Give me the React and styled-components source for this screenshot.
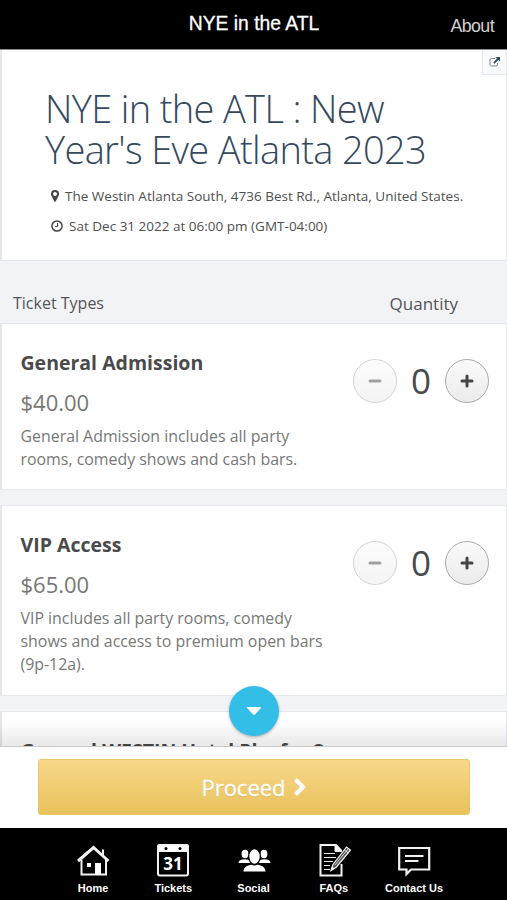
import styled, { createGlobalStyle } from "styled-components";

const GlobalStyle = createGlobalStyle`
  * {
    box-sizing: border-box;
    margin: 0;
    padding: 0;
  }

  body {
    width: 507px;
    height: 900px;
    overflow: hidden;
    font-family: "Open Sans", sans-serif;
  }
`

const Page = styled.div`
  width: 507px;
  height: 900px;
  display: flex;
  flex-direction: column;
  overflow: hidden;
  background-color: #f1f3f6;
`

const Header = styled.header`
  height: 50px;
  flex: none;
  display: grid;
  grid-template-columns: 90px 1fr 90px;
  background-color: #000000;
  border-bottom: 1px solid #8c8c8c;
  font-family: "Liberation Sans", sans-serif;
  color: #ffffff;
  white-space: nowrap;
`

const HeaderTitle = styled.h1`
  grid-column: 2;
  padding: 12px 0 0 1px;
  text-align: center;
  font-size: 19.3px;
  font-weight: 400;
  line-height: 24px;
  -webkit-text-stroke: 0.3px #ffffff;
`

const AboutLink = styled.a`
  padding: 14px 13px 0 0;
  text-align: right;
  font-size: 17.8px;
  line-height: 24px;
  letter-spacing: -0.6px;
  color: #d2d2d2;
`

const Content = styled.main`
  position: relative;
  flex: 1;
  min-height: 0;
  overflow: hidden;
`

const Card = styled.section`
  background-color: #ffffff;
  border: solid #e5e7ea;
  border-width: 1px 1px 1px 2px;
`

const EventCard = styled(Card)`
  position: relative;
  height: 211px;
  padding: 38px 20px 0 43px;
  border-top: none;
`

const ShareButton = styled.button`
  position: absolute;
  top: 0;
  right: 0;
  width: 24px;
  height: 25px;
  display: flex;
  align-items: center;
  justify-content: center;
  background-color: #f8fafc;
  border: solid #e3e7ec;
  border-width: 0 0 1px 1px;
`

const EventTitle = styled.h2`
  font-size: 38px;
  font-weight: 300;
  line-height: 41px;
  letter-spacing: -0.65px;
  color: #34495e;
  white-space: nowrap;
`

const EventInfo = styled.div`
  height: 30px;
  display: flex;
  align-items: center;
  gap: 6px;
  padding-left: 6px;
  font-size: 13.53px;
  color: #4f4f4f;
  white-space: nowrap;
`

const InfoList = styled.div`
  padding-top: 11px;
`

const ListHeading = styled.div`
  height: 62px;
  display: flex;
  justify-content: space-between;
  padding: 30px 49px 0 13px;
  font-size: 16px;
  line-height: 24px;
  color: #555555;
`

const QuantityLabel = styled.span`
  font-size: 17px;
  line-height: 26px;
`

const TicketCard = styled(Card)`
  height: ${({ $height }) => $height}px;
  margin-bottom: 15px;
  padding: 26px 17px 0 18.5px;
  display: flex;
  justify-content: space-between;
`

const TicketInfo = styled.div`
  white-space: nowrap;
`

const TicketName = styled.h3`
  font-size: 19.5px;
  font-weight: 700;
  line-height: 26px;
  color: #4a4a4a;
`

const Price = styled.p`
  margin-top: 11px;
  font-size: 22px;
  line-height: 30px;
  color: #777777;
`

const Description = styled.p`
  margin-top: 8px;
  font-size: 15.9px;
  line-height: 23px;
  color: #777777;
`

const Stepper = styled.div`
  height: 44px;
  margin-top: 9px;
  display: grid;
  grid-template-columns: 44px 48px 44px;
  align-items: center;
`

const StepButton = styled.button`
  width: 44px;
  height: 44px;
  display: flex;
  align-items: center;
  justify-content: center;
  border: 1px solid #aaaaaa;
  border-radius: 50%;
  background: linear-gradient(#fafafa, #ebebeb);
  color: #444444;
  opacity: ${({ disabled }) => (disabled ? 0.5 : 1)};
`

const Count = styled.span`
  text-align: center;
  font-size: 35px;
  line-height: 44px;
  color: #4a4a4a;
`

const ScrollFade = styled.div`
  position: absolute;
  left: 0;
  right: 0;
  bottom: 0;
  height: 26px;
  background: linear-gradient(rgba(0, 0, 0, 0), rgba(0, 0, 0, 0.09));
  border-bottom: 1px solid #cccccc;
`

const ScrollButton = styled.button`
  position: absolute;
  left: 229px;
  bottom: 11px;
  width: 50px;
  height: 50px;
  display: flex;
  align-items: center;
  justify-content: center;
  border: none;
  border-radius: 50%;
  background-color: #32bee6;
  box-shadow: 0 1px 3px rgba(0, 0, 0, 0.3);
`

const ActionBar = styled.div`
  height: 81px;
  flex: none;
  padding: 12px 37px 0 38px;
  background-color: #ffffff;
`

const ProceedButton = styled.button`
  width: 100%;
  height: 56px;
  display: flex;
  align-items: center;
  justify-content: center;
  gap: 7px;
  border: 1px solid #e9c46a;
  border-radius: 3px;
  background: linear-gradient(#f8d789, #e9c25b);
  font-family: inherit;
  font-size: 22px;
  color: #ffffff;
  text-shadow: 0 1px 1px rgba(0, 0, 0, 0.12);
  -webkit-text-stroke: 0.3px #ffffff;
`

const TabBar = styled.nav`
  height: 72px;
  flex: none;
  display: grid;
  grid-template-columns: repeat(5, 80.25px);
  justify-content: center;
  padding-top: 15px;
  background-color: #000000;
`

const Tab = styled.a`
  display: flex;
  flex-direction: column;
  align-items: center;
  font-family: "Liberation Sans", sans-serif;
  font-size: 11px;
  font-weight: 700;
  line-height: 14px;
  color: #ffffff;
  white-space: nowrap;
`

const TabIcon = styled.svg`
  width: 36px;
  height: 36px;
  margin-bottom: 2px;
  fill: none;
  stroke: #f2f2f2;
`

const icons = {
  Home: (
    <>
      <path d="M3 18 18.500 4.500l15 13.500" strokeWidth="3" />
      <path d="M6.500 16.500V31.500H31V16.500M28 6.500v6" strokeWidth="2" />
      <path d="M20 20h6v12h-6zM12 20h4v4h-4z" fill="#ffffff" stroke="none" />
    </>
  ),
  Tickets: (
    <>
      <path d="M5 1h26a3 3 0 0 1 3 3v5H2V4a3 3 0 0 1 3-3z" fill="#ffffff" stroke="none" />
      <rect x="3" y="2" width="30" height="30.500" rx="2" strokeWidth="2" />
      <circle cx="11" cy="5.500" r="1.500" fill="#000000" stroke="none" />
      <circle cx="25" cy="5.500" r="1.500" fill="#000000" stroke="none" />
      <text x="18" y="26.500" textAnchor="middle" fontFamily="Open Sans" fontSize="17" fontWeight="700" fill="#ffffff" stroke="none">31</text>
    </>
  ),
  Social: (
    <g fill="#ffffff" stroke="none">
      <ellipse cx="9" cy="11" rx="3.400" ry="4.200" />
      <ellipse cx="28" cy="11" rx="3.400" ry="4.200" />
      <path d="M2.500 20q0-3.500 6.500-3.700 4 0 5.500 2l-1 1.700zM34.500 20q0-3.500-6.500-3.700-4 0-5.500 2l1 1.700z" />
      <ellipse cx="18.500" cy="13.500" rx="5.800" ry="7.800" stroke="#000000" strokeWidth="1.200" />
      <path d="M7.500 28.500c0-4.300 3.500-6.200 8-6.800q3 1.400 6 0c4.500.6 8 2.500 8 6.800z" />
    </g>
  ),
  FAQs: (
    <>
      <path d="M25.500 21v11.500h-21V2h15.500l5.500 6" strokeWidth="2" />
      <path d="M19 2v6.500h6.500z" fill="#ffffff" />
      <path d="M8 10.500h11M8 14.500h12M8 18.500h9M8 22.500h6M8 26.500h6" strokeWidth="1.100" />
      <path d="m15 27.500 2-6L30.500 4l4 3-14 17z" fill="#555555" strokeWidth="1.200" />
      <path d="m19 22 13-16M28.500 7l4 3" strokeWidth=".8" />
      <path d="m15 27.500 1.200-3.700 2.500 2z" fill="#ffffff" stroke="none" />
    </>
  ),
  "Contact Us": (
    <>
      <path d="M3.200 5h30v21.500H15L10.500 31v-4.500H3.200z" strokeWidth="2.200" />
      <path d="M9 13h18.500M9 18h13.500" strokeWidth="2" />
    </>
  ),
};

const tickets = [
  {
    name: "General Admission",
    price: "$40.00",
    lines: ["General Admission includes all party", "rooms, comedy shows and cash bars."],
    height: 167,
  },
  {
    name: "VIP Access",
    price: "$65.00",
    lines: ["VIP includes all party rooms, comedy", "shows and access to premium open bars", "(9p-12a)."],
    height: 191,
  },
];

function Ticket({ ticket }) {
  return (
    <TicketCard $height={ticket.height}>
      <TicketInfo>
        <TicketName>{ticket.name}</TicketName>
        <Price>{ticket.price}</Price>
        <Description>
          {ticket.lines.map((line, idx) => {
            return <span key={idx}>{line}<br /></span>
          })}
        </Description>
      </TicketInfo>
      <Stepper>
        <StepButton disabled>
          <svg width="14" height="14" viewBox="0 0 14 14">
            <path d="M2 7h10" stroke="currentColor" strokeWidth="3" strokeLinecap="round" />
          </svg>
        </StepButton>
        <Count>0</Count>
        <StepButton>
          <svg width="14" height="14" viewBox="0 0 14 14">
            <path d="M2 7h10M7 2v10" stroke="currentColor" strokeWidth="3" strokeLinecap="round" />
          </svg>
        </StepButton>
      </Stepper>
    </TicketCard>
  );
}

export default function App() {
  return (
    <Page>
      <GlobalStyle />
      <Header>
        <HeaderTitle>NYE in the ATL</HeaderTitle>
        <AboutLink>About</AboutLink>
      </Header>
      <Content>
        <EventCard>
          <ShareButton>
            <svg width="11" height="10" viewBox="0 0 11 10" fill="none">
              <path d="M6 1.500H2.500a1.500 1.500 0 0 0-1.500 1.500v4.500A1.500 1.500 0 0 0 2.500 9H7a1.500 1.500 0 0 0 1.500-1.500V6" stroke="#7b8794" />
              <path d="M6.500 0H11v4.500L9.400 3 5.500 6.700 4.300 5.500 8 1.600z" fill="#34495e" />
            </svg>
          </ShareButton>
          <EventTitle>NYE in the ATL : New<br />Year's Eve Atlanta 2023</EventTitle>
          <InfoList>
            <EventInfo>
              <svg width="8" height="12" viewBox="0 0 8 12">
                <path fillRule="evenodd" fill="#444444" d="M4 0a4 4 0 0 1 4 4c0 1.200-.5 2-1 3L4.600 11.600q-.6.800-1.200 0L1 7C.5 6 0 5.200 0 4a4 4 0 0 1 4-4zm0 2a2 2 0 1 0 0 4 2 2 0 0 0 0-4z" />
              </svg>
              The Westin Atlanta South, 4736 Best Rd., Atlanta, United States.
            </EventInfo>
            <EventInfo>
              <svg width="12" height="12" viewBox="0 0 12 12" fill="none" stroke="#444444">
                <circle cx="6" cy="6" r="5.100" strokeWidth="1.500" />
                <path d="M6.500 3v3.500H4" />
              </svg>
              Sat Dec 31 2022 at 06:00 pm (GMT-04:00)
            </EventInfo>
          </InfoList>
        </EventCard>
        <ListHeading>
          <span>Ticket Types</span>
          <QuantityLabel>Quantity</QuantityLabel>
        </ListHeading>
        {tickets.map((ticket, idx) => {
          return <Ticket key={idx} ticket={ticket} />
        })}
        <TicketCard $height={160}>
          <TicketName>General WESTIN Hotel Pkg for 2</TicketName>
        </TicketCard>
        <ScrollFade />
        <ScrollButton>
          <svg width="16" height="10" viewBox="0 0 16 10">
            <path d="M1.500 1h13q1.200.1.400 1L9 8.600q-1 .9-2 0L1.100 2q-.8-.9.400-1z" fill="#ffffff" />
          </svg>
        </ScrollButton>
      </Content>
      <ActionBar>
        <ProceedButton>
          Proceed
          <svg width="14" height="20" viewBox="0 0 14 20">
            <path d="m2.500 2.500 7.500 7.500-7.500 7.500" fill="none" stroke="#ffffff" strokeWidth="4.200" />
          </svg>
        </ProceedButton>
      </ActionBar>
      <TabBar>
        {Object.keys(icons).map((name) => {
          return <Tab key={name}>
            <TabIcon viewBox="0 0 36 36">{icons[name]}</TabIcon>
            {name}
          </Tab>
        })}
      </TabBar>
    </Page>
  );
};
